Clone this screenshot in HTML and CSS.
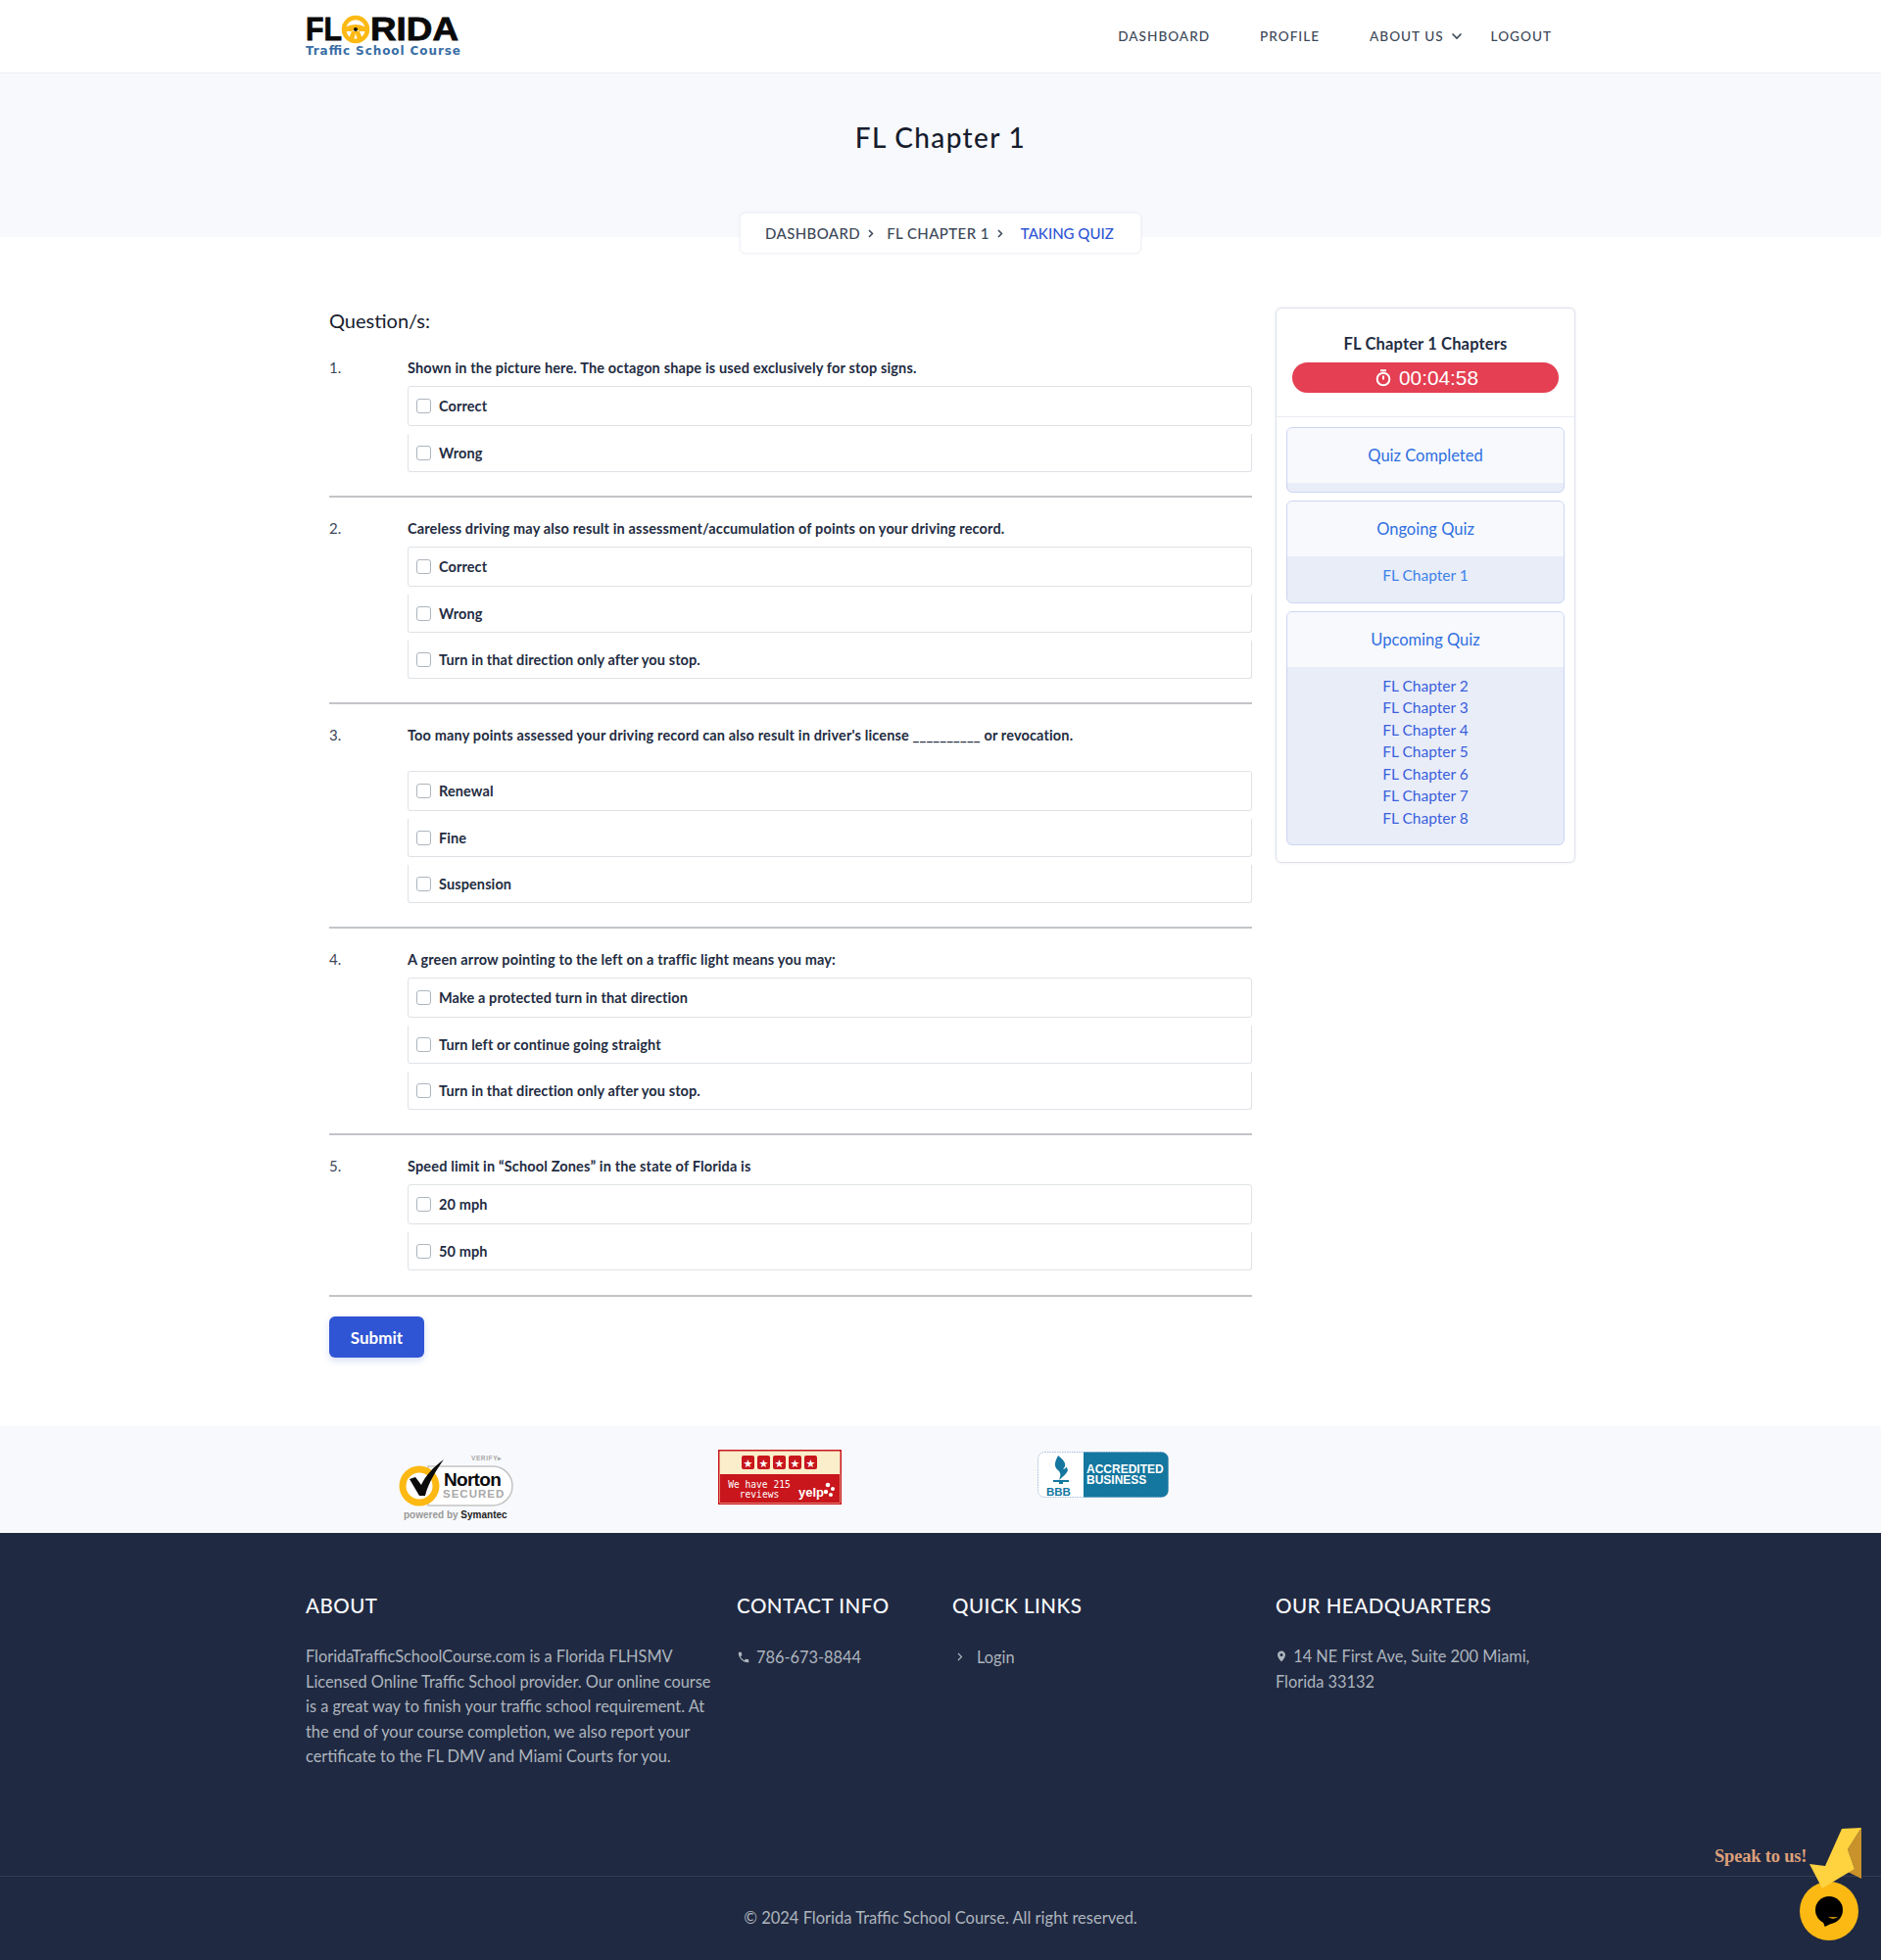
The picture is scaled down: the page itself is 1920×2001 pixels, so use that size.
FILE: index.html
```html
<!DOCTYPE html>
<html lang="en">
<head>
<meta charset="utf-8">
<title>FL Chapter 1</title>
<link rel="stylesheet" href="styles.css">
</head>
<body>
<header class="topbar">
  <div class="container topbar-inner">
    <a class="logo" href="#" aria-label="Florida Traffic School Course">
      <svg width="160" height="60" viewBox="0 -6 160 60">
        <text x="0" y="28" class="logo-main" textLength="37" lengthAdjust="spacingAndGlyphs">FL</text>
        <text x="66" y="28" class="logo-main" textLength="90" lengthAdjust="spacingAndGlyphs">RIDA</text>
        <circle cx="51" cy="17" r="12" fill="none" stroke="#fdb913" stroke-width="4.5"/>
        <path d="M40 15 Q51 9 62 15 L62 19 L55 19 Q51 16 47 19 L40 19 Z" fill="#fdb913"/>
        <path d="M47 19 L44 27 L49 28 L51 21 L53 28 L58 27 L55 19 Z" fill="#fdb913"/>
        <circle cx="51" cy="17" r="2" fill="#111"/>
        <text x="0" y="43" class="logo-sub" textLength="158" lengthAdjust="spacing">Traffic School Course</text>
      </svg>
    </a>
    <nav class="nav">
      <a href="#" class="nav-link nav-dash">Dashboard</a>
      <a href="#" class="nav-link nav-prof">Profile</a>
      <a href="#" class="nav-link nav-about">About us
        <svg class="nav-chev" width="12" height="8" viewBox="0 0 12 8"><path d="M1.5 1.5 L6 6 L10.500 1.5" fill="none" stroke="#3c4858" stroke-width="1.6"/></svg>
      </a>
      <a href="#" class="nav-link">Logout</a>
    </nav>
  </div>
</header>

<section class="hero">
  <h1 class="hero-title">FL Chapter 1</h1>
  <div class="crumb">
    <a href="#" class="crumb-link">Dashboard</a>
    <svg class="crumb-sep" width="6" height="9" viewBox="0 0 6 9"><path d="M1 1 L4.500 4.500 L1 8" fill="none" stroke="#3c4858" stroke-width="1.5"/></svg>
    <a href="#" class="crumb-link">FL Chapter 1</a>
    <svg class="crumb-sep" width="6" height="9" viewBox="0 0 6 9"><path d="M1 1 L4.500 4.500 L1 8" fill="none" stroke="#3c4858" stroke-width="1.5"/></svg>
    <span class="crumb-active">Taking Quiz</span>
  </div>
</section>

<main class="container main">
  <form class="quiz">
    <h2 class="quiz-title">Question/s:</h2>

    <div class="q">
      <div class="q-num">1.</div>
      <div class="q-body">
        <p class="q-text">Shown in the picture here. The octagon shape is used exclusively for stop signs.</p>
        <label class="opt"><input type="checkbox"><span>Correct</span></label>
        <label class="opt"><input type="checkbox"><span>Wrong</span></label>
      </div>
    </div>
    <hr class="rule">

    <div class="q">
      <div class="q-num">2.</div>
      <div class="q-body">
        <p class="q-text">Careless driving may also result in assessment/accumulation of points on your driving record.</p>
        <label class="opt"><input type="checkbox"><span>Correct</span></label>
        <label class="opt"><input type="checkbox"><span>Wrong</span></label>
        <label class="opt"><input type="checkbox"><span>Turn in that direction only after you stop.</span></label>
      </div>
    </div>
    <hr class="rule">

    <div class="q">
      <div class="q-num">3.</div>
      <div class="q-body">
        <p class="q-text q-text-gap">Too many points assessed your driving record can also result in driver's license __________ or revocation.</p>
        <label class="opt"><input type="checkbox"><span>Renewal</span></label>
        <label class="opt"><input type="checkbox"><span>Fine</span></label>
        <label class="opt"><input type="checkbox"><span>Suspension</span></label>
      </div>
    </div>
    <hr class="rule">

    <div class="q">
      <div class="q-num">4.</div>
      <div class="q-body">
        <p class="q-text">A green arrow pointing to the left on a traffic light means you may:</p>
        <label class="opt"><input type="checkbox"><span>Make a protected turn in that direction</span></label>
        <label class="opt"><input type="checkbox"><span>Turn left or continue going straight</span></label>
        <label class="opt"><input type="checkbox"><span>Turn in that direction only after you stop.</span></label>
      </div>
    </div>
    <hr class="rule">

    <div class="q">
      <div class="q-num">5.</div>
      <div class="q-body">
        <p class="q-text">Speed limit in “School Zones” in the state of Florida is</p>
        <label class="opt"><input type="checkbox"><span>20 mph</span></label>
        <label class="opt"><input type="checkbox"><span>50 mph</span></label>
      </div>
    </div>
    <hr class="rule rule-end">

    <button type="button" class="submit">Submit</button>
  </form>

  <aside class="side">
    <div class="side-head">
      <h3 class="side-title">FL Chapter 1 Chapters</h3>
      <div class="timer">
        <svg width="16" height="18" viewBox="0 0 16 18"><circle cx="8" cy="10" r="6.300" fill="none" stroke="#fff" stroke-width="2"/><path d="M5 1.200 H11 M8 6.500 V10.500" stroke="#fff" stroke-width="2" fill="none"/></svg>
        <span>00:04:58</span>
      </div>
    </div>
    <div class="side-body">
      <div class="panel">
        <div class="panel-head">Quiz Completed</div>
        <div class="panel-list panel-empty"></div>
      </div>
      <div class="panel">
        <div class="panel-head">Ongoing Quiz</div>
        <div class="panel-list"><a href="#" class="chap chap-on">FL Chapter 1</a></div>
      </div>
      <div class="panel">
        <div class="panel-head">Upcoming Quiz</div>
        <div class="panel-list">
          <a href="#" class="chap">FL Chapter 2</a>
          <a href="#" class="chap">FL Chapter 3</a>
          <a href="#" class="chap">FL Chapter 4</a>
          <a href="#" class="chap">FL Chapter 5</a>
          <a href="#" class="chap">FL Chapter 6</a>
          <a href="#" class="chap">FL Chapter 7</a>
          <a href="#" class="chap">FL Chapter 8</a>
        </div>
      </div>
    </div>
  </aside>
</main>

<section class="trust">
  <div class="container trust-inner">
    <svg class="badge-norton" width="130" height="76" viewBox="0 0 130 76">
      <text x="77" y="7" class="n-verify">VERIFY▸</text>
      <path d="M33 13 H99 A20 20 0 0 1 99 53 H33 Z" fill="#fff" stroke="#c4c4c4" stroke-width="1.500"/>
      <circle cx="24" cy="33" r="20.500" fill="#fdb913"/>
      <circle cx="24" cy="33" r="13.500" fill="#fff"/>
      <path d="M14 26 L20 24 L26 32 C30 23 38 14 49 6 C42 16 33 30 30 43 L24 43 Z" fill="#0b0b0b"/>
      <text x="49" y="32.500" class="n-name">Norton</text>
      <text x="48" y="45" class="n-sec">SECURED</text>
      <text x="8" y="65.500" class="n-pow">powered by <tspan class="n-sym">Symantec</tspan></text>
    </svg>

    <svg class="badge-yelp" width="126" height="56" viewBox="0 0 126 56">
      <rect x=".75" y=".75" width="124.500" height="54.500" fill="#fbeecb" stroke="#c8161c" stroke-width="1.500"/>
      <rect x="2" y="25" width="122" height="29" fill="#c8161c"/>
      <g fill="#c8161c">
        <rect x="24" y="6" width="13" height="14" rx="2"/><rect x="40" y="6" width="13" height="14" rx="2"/><rect x="56" y="6" width="13" height="14" rx="2"/><rect x="72" y="6" width="13" height="14" rx="2"/><rect x="88" y="6" width="13" height="14" rx="2"/>
      </g>
      <g class="y-star">
        <text x="30.500" y="17.500">★</text><text x="46.500" y="17.500">★</text><text x="62.500" y="17.500">★</text><text x="78.500" y="17.500">★</text><text x="94.500" y="17.500">★</text>
      </g>
      <text x="42" y="38.500" class="y-txt">We have 215</text>
      <text x="42" y="48.500" class="y-txt">reviews</text>
      <text x="82" y="48" class="y-name">yelp</text>
      <g fill="#fff"><circle cx="112" cy="36" r="2.300"/><circle cx="117" cy="40" r="2"/><circle cx="110" cy="43" r="2.200"/><circle cx="115" cy="46" r="2"/></g>
    </svg>

    <svg class="badge-bbb" width="134" height="48" viewBox="0 0 134 48">
      <rect x=".5" y=".5" width="133" height="46" rx="7" fill="#fff" stroke="#a9bde0" stroke-dasharray="1.500 1"/>
      <path d="M47 .5 H126.500 A7 7 0 0 1 133.500 7.500 V39.500 A7 7 0 0 1 126.500 46.500 H47 Z" fill="#14779f"/>
      <path d="M21 4 C27 9 31 13 26 18 C31 17 29 13 31 19 C29 24 25 26 22 29 C24 24 24 22 21 19 C16 15 18 10 21 4 Z" fill="#14779f"/>
      <path d="M16 29 H32 V31 H26 V33 H22 V31 H16 Z" fill="#14779f"/>
      <text x="9" y="45" class="b-bbb">BBB</text>
      <text x="50" y="22" class="b-acc">ACCREDITED</text>
      <text x="50" y="33" class="b-acc">BUSINESS</text>
    </svg>
  </div>
</section>

<footer class="footer">
  <div class="container footer-grid">
    <div class="f-about">
      <h4 class="f-head">About</h4>
      <p class="f-text">FloridaTrafficSchoolCourse.com is a Florida FLHSMV Licensed Online Traffic School provider. Our online course is a great way to finish your traffic school requirement. At the end of your course completion, we also report your certificate to the FL DMV and Miami Courts for you.</p>
    </div>
    <div>
      <h4 class="f-head">Contact Info</h4>
      <p class="f-text f-item">
        <svg width="14" height="14" viewBox="0 0 24 24"><path d="M6.600 10.800c1.400 2.800 3.800 5.100 6.600 6.600l2.200-2.200c.3-.3.700-.4 1-.2 1.100.4 2.300.6 3.600.6.600 0 1 .4 1 1V20c0 .6-.4 1-1 1C10.600 21 3 13.400 3 4c0-.6.400-1 1-1h3.500c.6 0 1 .4 1 1 0 1.300.2 2.500.6 3.600.1.300 0 .7-.2 1z" fill="#adb5bd"/></svg>
        786-673-8844
      </p>
    </div>
    <div>
      <h4 class="f-head">Quick Links</h4>
      <p class="f-text f-item f-link">
        <svg width="6" height="9" viewBox="0 0 6 9"><path d="M1 1 L4.500 4.500 L1 8" fill="none" stroke="#adb5bd" stroke-width="1.200"/></svg>
        Login
      </p>
    </div>
    <div>
      <h4 class="f-head">Our Headquarters</h4>
      <p class="f-text">
        <svg class="f-pin" width="12" height="14" viewBox="0 0 24 24"><path d="M12 1C7.600 1 4 4.600 4 9c0 6 8 14 8 14s8-8 8-14c0-4.400-3.600-8-8-8zm0 11a3 3 0 1 1 0-6 3 3 0 0 1 0 6z" fill="#adb5bd"/></svg>
        14 NE First Ave, Suite 200 Miami, Florida 33132
      </p>
    </div>
  </div>
  <div class="copy">© 2024 Florida Traffic School Course. All right reserved.</div>
</footer>

<div class="chat">
  <span class="chat-label">Speak to us!</span>
  <svg class="chat-art" width="66" height="120" viewBox="0 0 66 120">
    <circle cx="33" cy="85" r="30" fill="#fdb913"/>
    <circle cx="33" cy="84" r="14" fill="#000"/>
    <polygon points="26,94 28.700,101 37,97" fill="#000"/>
    <path d="M32 90.700 Q37 95 42 90.700 Q37 92 32 90.700 Z" fill="#fdb913"/>
    <polygon points="66,0 66,52 50,44 59,42 52,22" fill="#c9922a"/>
    <polygon points="46,1 66,0 52,22 59,42 39,54 26,62 13,37 29,39" fill="#ffd23f"/>
  </svg>
</div>
</body>
</html>
```

FILE: styles.css
```css
* { box-sizing: border-box; }
html, body { margin: 0; padding: 0; }
body {
  position: relative;
  height: 2001px;
  overflow: hidden;
  font-family: "Lato", "Noto Sans", sans-serif;
  font-size: 16px;
  color: #161c2d;
  background: #fff;
}
a { text-decoration: none; color: inherit; }
.container { width: 1296px; margin: 0 auto; }

/* top bar */
.topbar { height: 75px; background: #fff; border-bottom: 1px solid #eceff6; }
.topbar-inner { display: flex; justify-content: space-between; align-items: center; height: 74px; }
.logo { display: block; height: 60px; }
.logo svg { display: block; }
.logo-main { font-family: "Liberation Sans", sans-serif; font-weight: 700; font-size: 33px; fill: #0a0a0a; stroke: #0a0a0a; stroke-width: .8px; }
.logo-sub { font-family: "DejaVu Sans", sans-serif; font-weight: 700; font-size: 12px; fill: #3a6ea5; }
.nav { display: flex; align-items: center; margin-right: 24px; }
.nav-link {
  font-size: 13.600px;
  letter-spacing: 1px;
  text-transform: uppercase;
  color: #3c4858;
  font-weight: 500;
  white-space: nowrap;
}
.nav-dash { margin-right: 51px; }
.nav-prof { margin-right: 51px; }
.nav-about { margin-right: 29px; display: flex; align-items: center; gap: 7px; }
.nav-chev { display: block; }

/* hero */
.hero { position: relative; height: 167px; background: #f8f9fc; text-align: center; }
.hero-title { margin: 0; padding-top: 46px; font-size: 28px; line-height: 38px; font-weight: 500; letter-spacing: 1.350px; color: #161c2d; }
.crumb {
  position: absolute;
  left: 755px;
  top: 142px;
  width: 410px;
  height: 42px;
  display: flex;
  align-items: center;
  padding-left: 25px;
  background: #fff;
  border: 1px solid #f1f3f9;
  border-radius: 6px;
  box-shadow: 0 0 3px rgba(60, 72, 88, .08);
  font-size: 15px;
  text-transform: uppercase;
  font-weight: 500;
  letter-spacing: .4px;
  color: #3c4858;
}
.crumb-sep { margin: 0 13px 0 8px; }
.crumb-active { color: #2f55d4; margin-left: 5px; letter-spacing: 0; }

/* main */
.main { display: flex; justify-content: space-between; height: 1214px; }
.quiz { width: 942px; margin-left: 24px; padding-top: 71px; }
.quiz-title { margin: 0 0 24px; font-size: 20px; line-height: 28px; font-weight: 400; color: #161c2d; }
.q { display: flex; }
.q-num { width: 80px; flex: none; font-size: 15px; line-height: 21px; color: #3c4858; }
.q-body { flex: 1; }
.q-text { margin: 0 0 8px; font-size: 14.500px; line-height: 21px; font-weight: 700; letter-spacing: .15px; color: #232c42; }
.q-text-gap { margin-bottom: 26px; }
.opt {
  display: flex;
  align-items: center;
  gap: 8px;
  height: 39px;
  margin-top: 8px;
  padding-left: 8px;
  border: 1px solid #dee2e6;
  border-top: 0;
  border-radius: 0 0 3px 3px;
  font-size: 14.500px;
  font-weight: 700;
  letter-spacing: .1px;
  color: #232c42;
}
.q-text + .opt { height: 41px; margin-top: 0; border-top: 1px solid #dee2e6; border-radius: 3px; }
.opt input {
  appearance: none;
  flex: none;
  width: 15px;
  height: 15px;
  margin: 0;
  background: #fff;
  border: 1px solid #adb5bd;
  border-radius: 3px;
}
.rule { height: 2px; margin: 24px 0 21px; border: 0; background: #c2c4c8; }
.rule-end { margin: 25px 0 20px; }
.submit {
  display: block;
  width: 97px;
  height: 42px;
  border: 0;
  border-radius: 6px;
  background: #2f55d4;
  box-shadow: 0 3px 7px rgba(47, 85, 212, .2);
  color: #fff;
  font: 700 17px "Lato", sans-serif;
}

/* sidebar */
.side {
  width: 306px;
  height: 567px;
  margin-top: 72px;
  background: #fff;
  border: 1px solid #dee2ee;
  border-radius: 6px;
  box-shadow: 0 0 3px rgba(60, 72, 88, .1);
}
.side-head { height: 111px; padding: 25px 16px 0; text-align: center; border-bottom: 1px solid #e9ecf3; }
.side-title { margin: 0 0 8px; font-size: 16.500px; line-height: 22px; font-weight: 700; letter-spacing: .15px; color: #232c42; }
.timer {
  display: flex;
  justify-content: center;
  align-items: center;
  gap: 8px;
  height: 31px;
  padding-left: 3px;
  border-radius: 16px;
  background: #e43f52;
  color: #fff;
  font: 20.800px "Liberation Sans", sans-serif;
}
.timer svg { display: block; }
.side-body { display: flex; flex-direction: column; gap: 8px; padding: 10px 10px 0; }
.panel { border: 1px solid #ccd6f3; border-radius: 6px; overflow: hidden; background: #e9edf8; }
.panel-head { height: 56px; background: #f8f9fd; text-align: center; font-size: 16.500px; line-height: 56px; color: #2f6fe0; }
.panel-empty { height: 9px; }
.panel-list { padding: 8px 0 16px; text-align: center; }
.panel-empty.panel-list { padding: 0; }
.chap { display: block; font-size: 15.500px; line-height: 22.500px; color: #3a5fdc; }
.chap-on { color: #3d82e8; }

/* trust */
.trust { height: 109px; background: #f8f9fc; }
.trust-inner { position: relative; height: 109px; }
.badge-norton, .badge-yelp, .badge-bbb { position: absolute; display: block; }
.badge-norton { left: 92px; top: 28px; width: 130px; }
.badge-yelp { left: 421px; top: 24px; }
.badge-bbb { left: 747px; top: 26px; }
.n-verify { font: 700 6.500px "Liberation Sans", sans-serif; fill: #a8a8a8; letter-spacing: .6px; }
.n-name { font: 700 19px "Liberation Sans", sans-serif; fill: #0b0b0b; letter-spacing: -.7px; }
.n-sec { font: 700 11.500px "Liberation Sans", sans-serif; fill: #a8a8a8; letter-spacing: 1px; }
.n-pow { font: 700 10px "Liberation Sans", sans-serif; fill: #999; }
.n-sym { fill: #222; }
.y-star text { font: 11px "DejaVu Sans", sans-serif; fill: #fff; text-anchor: middle; }
.y-txt { font: 9.600px "DejaVu Sans Mono", monospace; fill: #fff; text-anchor: middle; }
.y-name { font: 700 13px "Liberation Sans", sans-serif; fill: #fff; }
.b-bbb { font: 700 11.500px "Liberation Sans", sans-serif; fill: #14779f; }
.b-acc { font: 700 12px "Liberation Sans", sans-serif; fill: #fff; }

/* footer */
.footer { height: 436px; background: #202942; color: #adb5bd; }
.footer-grid { display: grid; grid-template-columns: 440px 220px 330px 306px; height: 350px; padding-top: 60px; }
.f-head { margin: 0 0 25px; font-size: 20.500px; line-height: 28px; font-weight: 500; text-transform: uppercase; letter-spacing: .5px; color: #f8f9fc; }
.f-text { margin: 0; font-size: 16.350px; line-height: 25.500px; color: #adb5bd; }
.f-about .f-text { width: 416px; }
.f-item { display: flex; align-items: center; gap: 6px; padding-top: 1px; }
.f-link { gap: 14px; padding-left: 5px; }
.f-pin { vertical-align: -1px; margin-right: 2px; }
.copy { height: 86px; border-top: 1px solid #343c57; text-align: center; line-height: 84px; font-size: 16.500px; color: #adb5bd; }

/* chat launcher */
.chat { position: absolute; right: 20px; top: 1866px; width: 170px; height: 120px; }
.chat-label { position: absolute; left: 20px; top: 19px; font: 700 18.500px "Liberation Serif", serif; letter-spacing: -.2px; color: #dca07a; white-space: nowrap; }
.chat-art { position: absolute; right: 0; top: 0; display: block; }
```
